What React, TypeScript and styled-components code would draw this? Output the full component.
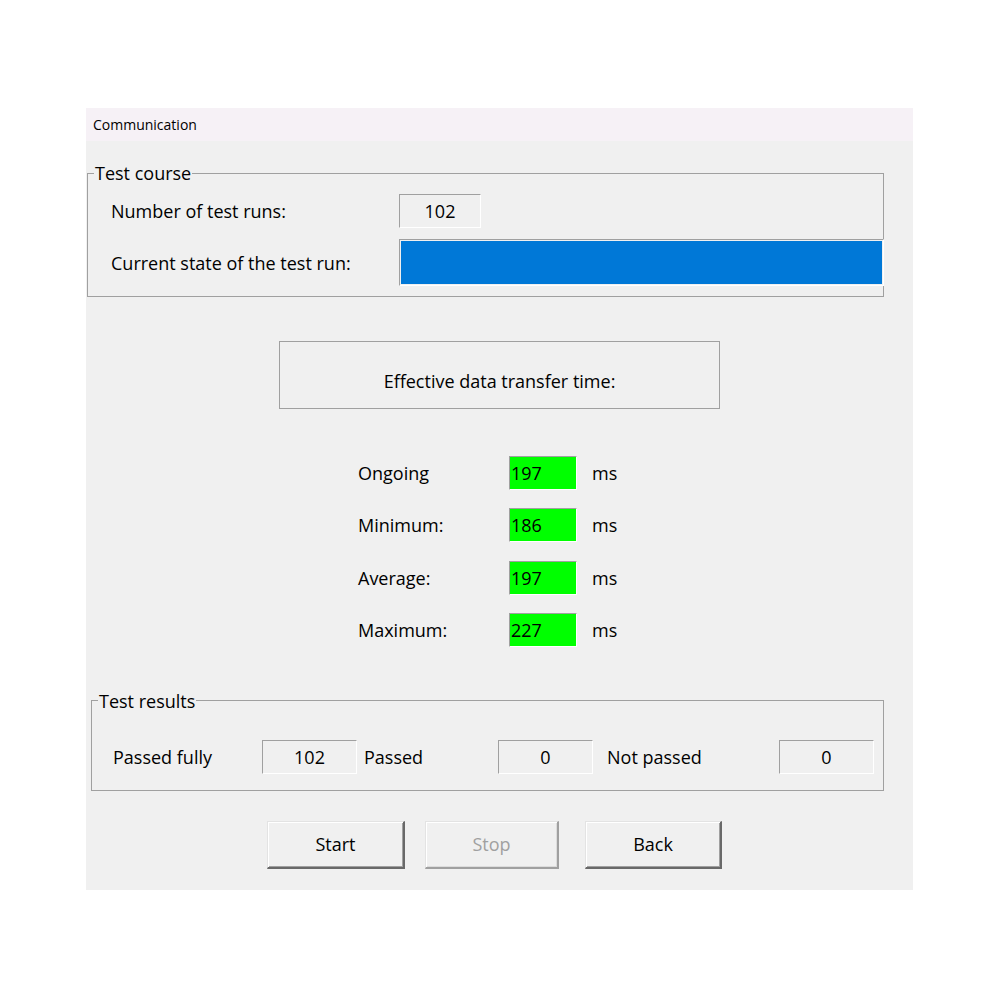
import React from 'react';
import styled, { createGlobalStyle } from 'styled-components';

const GlobalStyle = createGlobalStyle`
  html, body {
    margin: 0;
    padding: 0;
    background: #ffffff;
  }
  body {
    font-family: "Open Sans", "Noto Sans", "Liberation Sans", sans-serif;
    color: #000000;
  }
`;

// Página
const Page = styled.div`
  padding: 108px 0 0 86px;
`;

// Janela do diálogo
const Window = styled.div`
  width: 827px;
  height: 782px;
  background: #f0f0f0;
  display: flex;
  flex-direction: column;
`;

const TitleBar = styled.div`
  height: 33px;
  background: #f6f1f6;
  display: flex;
  align-items: center;
  padding-left: 7px;
  font-size: 14px;
`;

const Body = styled.div`
  display: flex;
  flex-direction: column;
  padding: 0 29px 0 1px;
`;

// Caixa de grupo
const GroupBox = styled.fieldset<{ $top: number; $left: number }>`
  margin: ${(p) => p.$top}px 0 0 ${(p) => p.$left}px;
  padding: 0;
  box-sizing: border-box;
  border: 1px solid #a0a0a0;
  min-width: 0;

  legend {
    font-size: 18px;
    padding: 0 1px;
    margin-left: 6px;
    line-height: 20px;
  }
`;

const CourseGrid = styled.div`
  display: grid;
  grid-template-columns: 288px 1fr;
  grid-template-rows: 34px 47px;
  row-gap: 11px;
  align-items: center;
  padding: 11px 0 10px 23px;
`;

const Label = styled.span`
  font-size: 18px;
  white-space: nowrap;
`;

const Field = styled.div<{ $width: number; $align?: string; $bg?: string }>`
  width: ${(p) => p.$width}px;
  height: 34px;
  box-sizing: border-box;
  border-top: 1px solid #a0a0a0;
  border-left: 1px solid #a0a0a0;
  border-right: 1px solid #ffffff;
  border-bottom: 1px solid #ffffff;
  background: ${(p) => p.$bg || '#f0f0f0'};
  display: flex;
  align-items: center;
  justify-content: ${(p) => p.$align || 'center'};
  padding-left: ${(p) => (p.$align ? '1px' : '0')};
  font-size: 18px;
`;

const Progress = styled.div`
  height: 47px;
  box-sizing: border-box;
  margin-right: -1px;
  border-top: 1px solid #a0a0a0;
  border-left: 1px solid #a0a0a0;
  border-right: 1px solid #ffffff;
  border-bottom: 1px solid #ffffff;
  padding: 1px;
`;

const ProgressFill = styled.div`
  height: 100%;
  background: #0078d7;
`;

const TimeBox = styled.div`
  align-self: center;
  margin: 44px 0 0 28px;
  width: 441px;
  height: 68px;
  box-sizing: border-box;
  border: 1px solid #a0a0a0;
  display: flex;
  justify-content: center;
  padding-top: 27px;
  font-size: 18px;
`;

const Stats = styled.div`
  display: grid;
  grid-template-columns: 151px 83px auto;
  grid-auto-rows: 33px;
  row-gap: 19.5px;
  align-items: center;
  margin: 47px 0 0 271px;
`;

const ResultsRow = styled.div`
  display: flex;
  align-items: center;
  height: 34px;
  padding: 0 0 0 21px;
  margin: 29px 0 16px;
`;

const ResultLabel = styled.span<{ $width: number; $indent?: number }>`
  width: ${(p) => p.$width}px;
  padding-left: ${(p) => p.$indent || 0}px;
  box-sizing: border-box;
  font-size: 18px;
  white-space: nowrap;
`;

const ButtonRow = styled.div`
  display: flex;
  gap: 20px;
  margin: 30px 0 0 180px;
`;

const Button = styled.button<{ $width: number; $gapAfter?: number }>`
  width: ${(p) => p.$width}px;
  height: 48px;
  margin-right: ${(p) => p.$gapAfter || 0}px;
  box-sizing: border-box;
  background: #f0f0f0;
  font-family: inherit;
  font-size: 18px;
  color: #000000;
  border-style: solid;
  border-width: 1px 2px 2px 1px;
  border-color: #e3e3e3 #696969 #696969 #e3e3e3;
  box-shadow: inset 1px 1px 0 #ffffff, inset -1px -1px 0 #a0a0a0;
  padding: 0;

  &:disabled {
    color: #a0a0a0;
    border-color: #e3e3e3 #a0a0a0 #a0a0a0 #e3e3e3;
    box-shadow: inset 1px 1px 0 #ffffff, inset -1px -1px 0 #dcdcdc;
  }
`;

type Stat = { label: string; value: number };

const App: React.FC = (): JSX.Element => {
  const stats: Stat[] = [
    { label: 'Ongoing', value: 197 },
    { label: 'Minimum:', value: 186 },
    { label: 'Average:', value: 197 },
    { label: 'Maximum:', value: 227 },
  ];

  return (
    <Page>
      <GlobalStyle />
      <Window>
        <TitleBar>Communication</TitleBar>
        <Body>
          <GroupBox $top={22} $left={0}>
            <legend>Test course</legend>
            <CourseGrid>
              <Label>Number of test runs:</Label>
              <Field $width={82}>102</Field>
              <Label>Current state of the test run:</Label>
              <Progress>
                <ProgressFill />
              </Progress>
            </CourseGrid>
          </GroupBox>

          <TimeBox>Effective data transfer time:</TimeBox>

          <Stats>
            {stats.map((s) => (
              <React.Fragment key={s.label}>
                <Label>{s.label}</Label>
                <Field $width={68} $align="flex-start" $bg="#00ff00">
                  {s.value}
                </Field>
                <Label>ms</Label>
              </React.Fragment>
            ))}
          </Stats>

          <GroupBox $top={44} $left={4}>
            <legend>Test results</legend>
            <ResultsRow>
              <ResultLabel $width={149}>Passed fully</ResultLabel>
              <Field $width={95}>102</Field>
              <ResultLabel $width={141} $indent={7}>Passed</ResultLabel>
              <Field $width={95}>0</Field>
              <ResultLabel $width={186} $indent={14}>Not passed</ResultLabel>
              <Field $width={95}>0</Field>
            </ResultsRow>
          </GroupBox>

          <ButtonRow>
            <Button $width={138}>Start</Button>
            <Button $width={134} $gapAfter={6} disabled>
              Stop
            </Button>
            <Button $width={137}>Back</Button>
          </ButtonRow>
        </Body>
      </Window>
    </Page>
  );
};

export default App;
